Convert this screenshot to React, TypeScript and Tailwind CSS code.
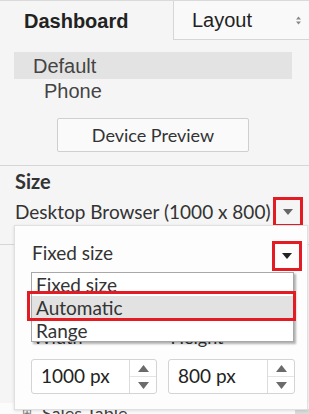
import React from "react";

const Tri = ({ color }: { color: string }) => (
  <svg width="10" height="6" viewBox="0 0 10 6">
    <path d="M0 0 L10 0 L5 6 Z" fill={color} />
  </svg>
);

const Spin = () => (
  <div className="flex w-[27px] flex-col border-l border-[#dcdcdc]">
    <div className="flex flex-1 items-center justify-center border-b border-[#e4e4e4]">
      <svg width="11" height="7" viewBox="0 0 11 7"><path d="M0 7 L11 7 L5.5 0 Z" fill="#6b6b6b" /></svg>
    </div>
    <div className="flex flex-1 items-center justify-center">
      <svg width="11" height="7" viewBox="0 0 11 7"><path d="M0 0 L11 0 L5.5 7 Z" fill="#6b6b6b" /></svg>
    </div>
  </div>
);

export default function App() {
  const arial = { fontFamily: '"Liberation Sans", Arial, sans-serif' };
  return (
    <div
      className="relative h-[414px] w-[309px] overflow-hidden border-t border-[#dadada] bg-[#f5f5f5] text-[#333]"
      style={{ fontFamily: "Lato, sans-serif" }}
    >
      {/* Tabs */}
      <div className="flex h-[39px]">
        <div className="flex w-[173px] items-center pl-[24px] text-[20px] font-bold text-[#222]" style={arial}>
          Dashboard
        </div>
        <div
          className="flex flex-1 items-center justify-between border-b border-l border-[#d6d6d6] bg-[#f9f9f9] pl-[18px] pr-[8px] text-[20px] text-[#222]"
          style={arial}
        >
          <span>Layout</span>
          <svg width="5" height="9" viewBox="0 0 5 9">
            <path d="M0 3.5 L5 3.5 L2.5 0.5 Z M0 5.5 L5 5.5 L2.5 8.5 Z" fill="#888" />
          </svg>
        </div>
      </div>

      {/* Device list */}
      <div className="ml-[14px] mt-[12px] w-[278px] text-[20px] text-[#444]" style={arial}>
        <div className="flex h-[27px] items-center bg-[#e3e3e3] pl-[19px]">Default</div>
        <div className="flex h-[24px] items-center pl-[30px]">Phone</div>
      </div>

      {/* Device Preview */}
      <div className="ml-[57px] mt-[15px] flex h-[34px] w-[192px] items-center justify-center rounded-[2px] border border-[#cfcfcf] bg-[#fafafa] text-[18px] text-[#333]">
        Device Preview
      </div>

      {/* Size */}
      <div className="mt-[13px] h-[80px] border-b border-t border-[#d6d6d6]">
        <div className="pl-[15px] pt-[3px] text-[20px] font-bold leading-[24px] text-[#333]">Size</div>
        <div className="mt-[4px] flex items-center">
          <span className="pl-[15px] text-[19px] leading-[26px] text-[#333]">Desktop Browser (1000 x 800)</span>
          <div className="ml-auto mr-[6px] flex h-[30px] w-[30px] items-center justify-center border-[3px] border-[#e31b23]">
            <Tri color="#666" />
          </div>
        </div>
      </div>

      {/* Content under the popover */}
      <div className="mt-[158px] flex h-[20px] items-center bg-[#fcfcfc] pl-[22px] text-[18px] text-[#444]">
        <span className="mr-[10px] text-[12px] text-[#777]">⊞</span>Sales Table
      </div>
      <div className="absolute bottom-0 right-0 h-[5px] w-[14px] bg-[#dcdcdc]" />

      {/* Popover */}
      <div className="absolute left-[14px] top-[224px] h-[185px] w-[294px] border border-[#e0e0e0] bg-[#fdfdfd] shadow-[0_1px_3px_rgba(0,0,0,0.12)]">
        <div className="mt-[15px] flex h-[30px] items-center">
          <span className="pb-[5px] pl-[17px] text-[19px] text-[#333]">Fixed size</span>
          <div className="ml-auto mr-[5px] flex h-[30px] w-[30px] items-center justify-center border-[3px] border-[#e31b23]">
            <Tri color="#222" />
          </div>
        </div>

        <div className="mt-[54px] flex text-[18px] leading-[24px] text-[#333]">
          <span className="pl-[18px]">Width</span>
          <span className="pl-[88px]">Height</span>
        </div>

        <div className="mt-[10px] flex gap-[11px] pl-[16px]">
          <div className="flex h-[35px] w-[126px] rounded-[3px] border border-[#d4d4d4] bg-white">
            <div className="flex flex-1 items-center pl-[9px] text-[19px] text-[#222]">1000 px</div>
            <Spin />
          </div>
          <div className="flex h-[35px] w-[127px] rounded-[3px] border border-[#d4d4d4] bg-white">
            <div className="flex flex-1 items-center pl-[9px] text-[19px] text-[#222]">800 px</div>
            <Spin />
          </div>
        </div>

        {/* Dropdown list */}
        <div className="absolute left-[16px] top-[46px] w-[263px] border border-[#a8a8a8] bg-white text-[19px] leading-[23px] text-[#333] shadow-[2px_2px_2px_rgba(0,0,0,0.3)]">
          <div className="h-[23px] pl-[4px]">Fixed size</div>
          <div className="h-[23px] bg-[#e2e2e2] pl-[4px]">Automatic</div>
          <div className="h-[22px] pl-[4px]">Range</div>
        </div>
        <div className="absolute left-[12px] top-[65px] h-[30px] w-[269px] border-[3px] border-[#e31b23]" />
      </div>
    </div>
  );
}
